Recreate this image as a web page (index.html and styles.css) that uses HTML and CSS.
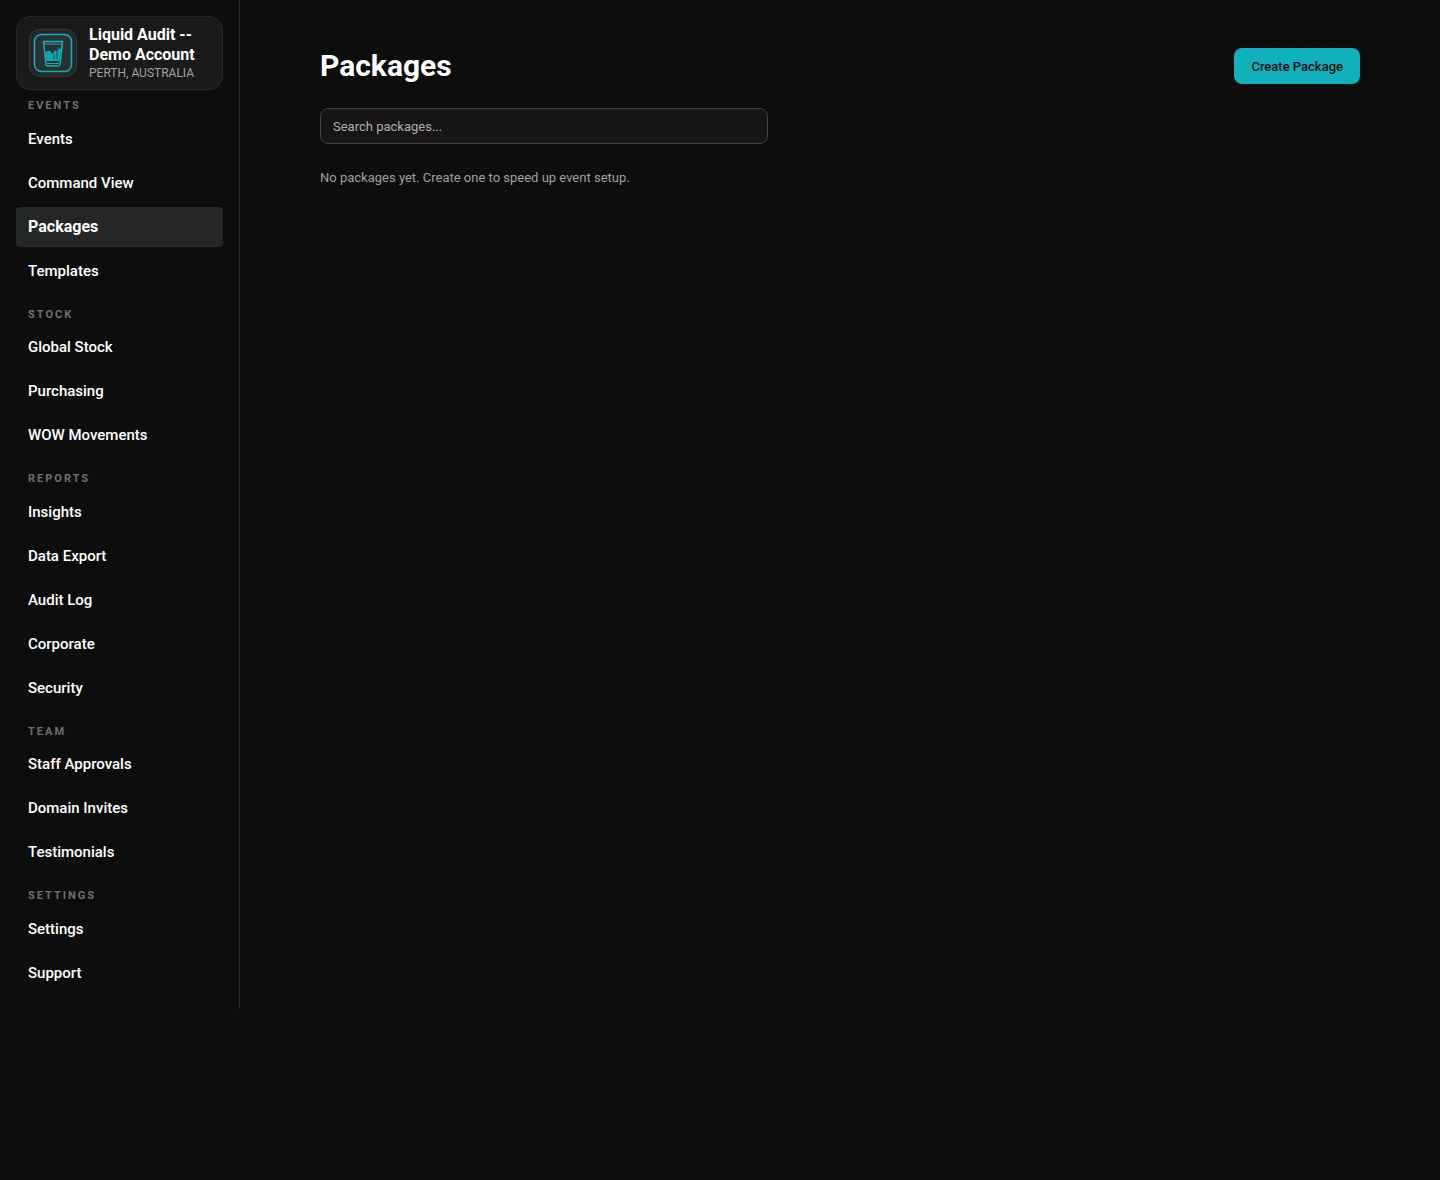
FILE: index.html
```html
<!doctype html>
<html lang="en">
<head>
<meta charset="utf-8">
<meta name="viewport" content="width=device-width, initial-scale=1">
<title>Packages</title>
<link rel="stylesheet" href="styles.css">
</head>

<body>
<div class="layout">
	<aside class="sidebar">
		<div class="account">
			<div class="account-logo">
				<svg width="40" height="40" viewBox="0 0 40 40" fill="none" stroke="#10b0bc">
					<rect x="1.5" y="1.5" width="37" height="37" rx="7" fill="#2b3031" stroke-width="1.5"/>
					<path d="M10.5 8.5h19l-2.5 23q-.2 1.5-2 1.5H15q-1.8-.2-2-1.5z" stroke-width="1.5"/>
					<path d="M11 11h18" stroke-width="1"/>
					<path d="M12 20q2-3 5-2l3 3 2-4 2 2 2-4 2 1-1.5 12h-13z" fill="#10a4af" stroke="none"/>
					<path d="M21 21v5M24 19v7M26 12l-3 5" stroke="#23494c" stroke-width="1"/>
					<path d="M14 30.5h12" stroke-width="1"/>
				</svg>
			</div>
			<div class="account-text">
				<div class="account-name">Liquid Audit -- Demo Account</div>
				<div class="account-place">PERTH, AUSTRALIA</div>
			</div>
		</div>
		<nav>
			<h2>EVENTS</h2>
			<ul>
				<li><a href="#">Events</a></li>
				<li><a href="#">Command View</a></li>
				<li><a href="#" class="active">Packages</a></li>
				<li><a href="#">Templates</a></li>
			</ul>
			<h2>STOCK</h2>
			<ul>
				<li><a href="#">Global Stock</a></li>
				<li><a href="#">Purchasing</a></li>
				<li><a href="#">WOW Movements</a></li>
			</ul>
			<h2>REPORTS</h2>
			<ul>
				<li><a href="#">Insights</a></li>
				<li><a href="#">Data Export</a></li>
				<li><a href="#">Audit Log</a></li>
				<li><a href="#">Corporate</a></li>
				<li><a href="#">Security</a></li>
			</ul>
			<h2>TEAM</h2>
			<ul>
				<li><a href="#">Staff Approvals</a></li>
				<li><a href="#">Domain Invites</a></li>
				<li><a href="#">Testimonials</a></li>
			</ul>
			<h2>SETTINGS</h2>
			<ul>
				<li><a href="#">Settings</a></li>
				<li><a href="#">Support</a></li>
			</ul>
		</nav>
	</aside>
	<main class="content">
		<header class="page-head">
			<h1>Packages</h1>
			<button type="button" class="create">Create Package</button>
		</header>
		<input type="search" class="search" placeholder="Search packages..." aria-label="Search packages">
		<p class="empty">No packages yet. Create one to speed up event setup.</p>
	</main>
</div>
</body>
</html>
```
FILE: styles.css
```css
* {margin:0; padding:0; box-sizing:border-box;}
body {background:#0d0d0d; color:#fff; font-family:Roboto, "Liberation Sans", sans-serif; font-size:16px;}
ul {list-style:none;}

.layout {display:flex; align-items:flex-start;}

.sidebar {width:240px; flex:none; padding:16px; border-right:1px solid #272828;}
.account {display:flex; align-items:center; gap:12px; padding:8px 12px; border:1px solid #272828; border-radius:14px; background:#1a1a1a;}
.account-logo {display:flex; flex:none; align-items:center; justify-content:center; width:48px; height:48px; border:1px solid #343838; border-radius:11px; background:#252828;}
.account-name {font-weight:700; line-height:20px;}
.account-place {font-size:12px; line-height:16px; color:#a0a0a0;}

nav h2 {padding:16px 12px 4px; font-size:11px; line-height:1.5; font-weight:700; letter-spacing:2px; color:#707070;}
nav h2:first-child {padding-top:8px;}
nav ul {display:flex; flex-direction:column; gap:4px;}
nav a {display:block; padding:8px 12px; border-radius:4px; font-size:15px; line-height:24px; font-weight:500; color:#fff; text-decoration:none;}
nav a.active {background:#252727; font-size:16px; font-weight:700;}

.content {flex:1; min-width:0; padding:48px 80px;}
.page-head {display:flex; align-items:center; justify-content:space-between; margin-bottom:24px;}
h1 {font-size:30px; line-height:36px; font-weight:700;}
.create {height:36px; padding:0 17px; border:0; border-radius:8px; background:#10b0bc; color:#0d0d0d; font:500 13px Roboto, "Liberation Sans", sans-serif; cursor:pointer;}
.search {display:block; width:100%; max-width:448px; height:36px; padding:0 12px; border:1px solid #434343; border-radius:8px; background:#171516; color:#fff; font:13px Roboto, "Liberation Sans", sans-serif;}
.search::placeholder {color:#b0b0b0; opacity:1;}
.empty {margin-top:24px; font-size:13px; line-height:20px; color:#a0a0a0;}
```
